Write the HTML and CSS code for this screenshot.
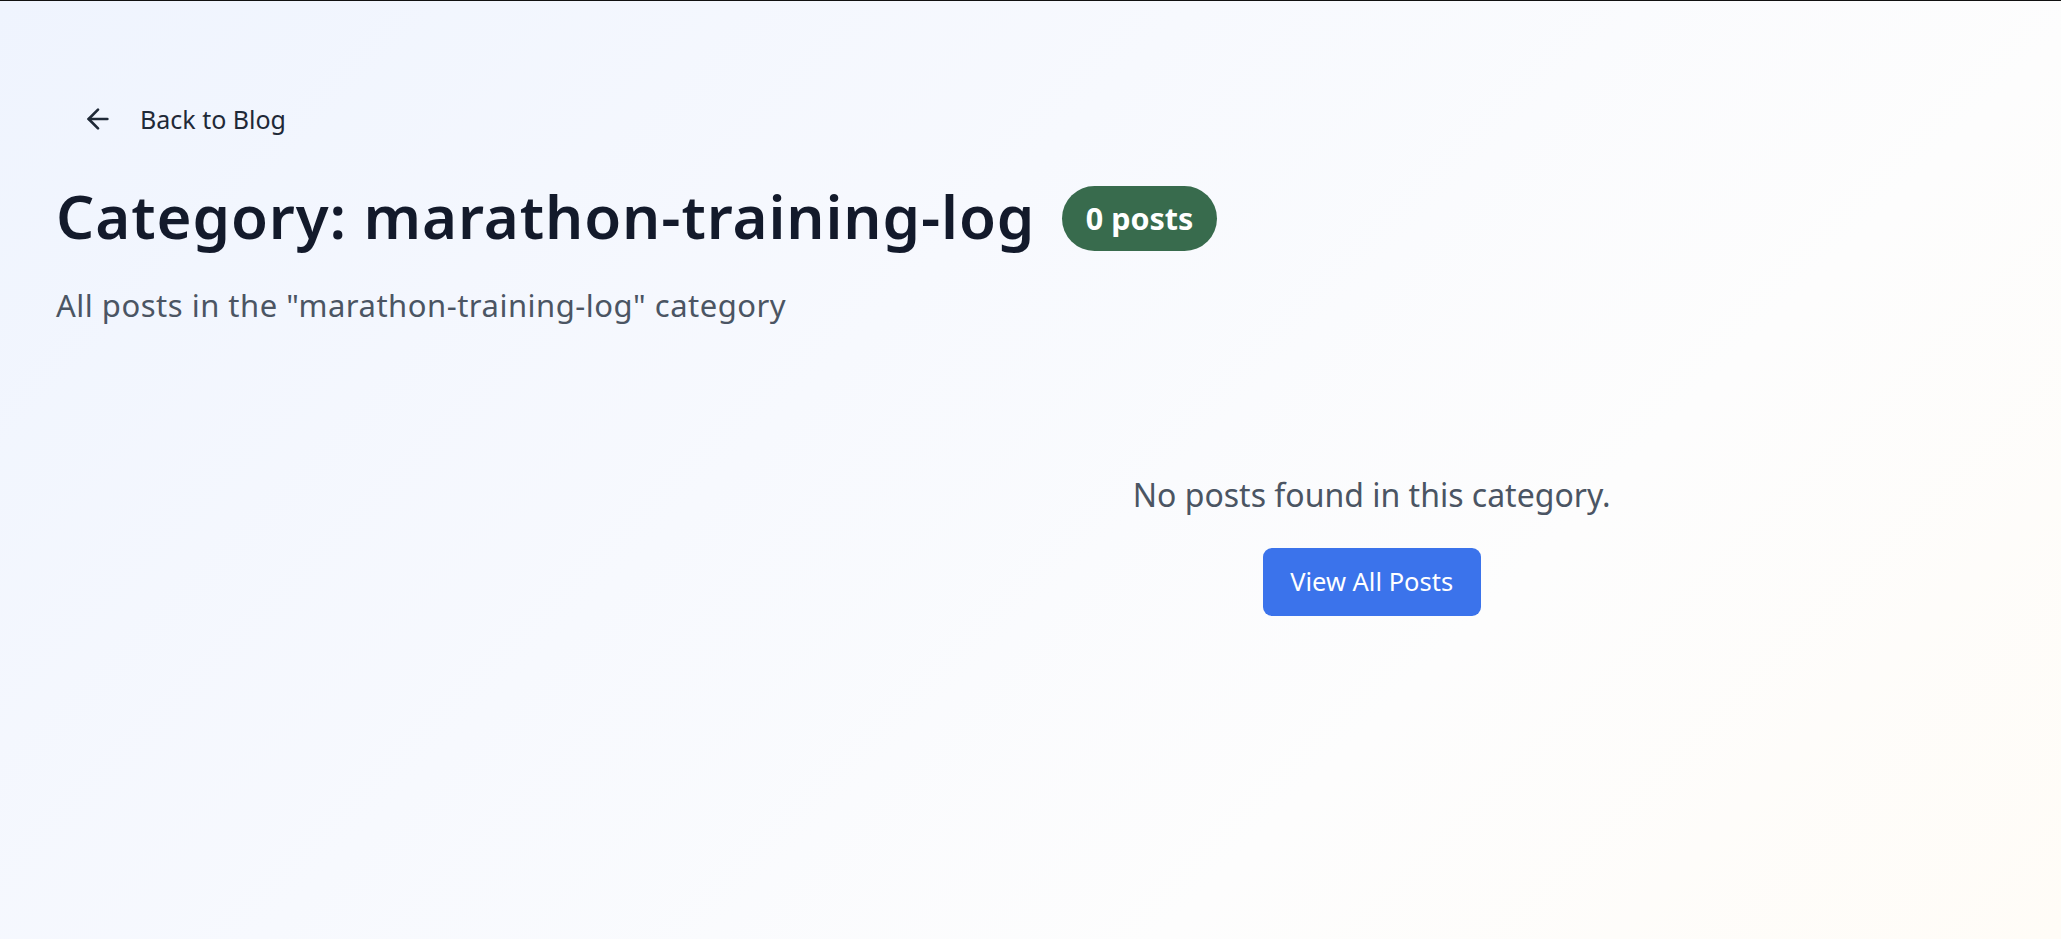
FILE: index.html
```html
<!DOCTYPE html>
<html lang="en">
<head>
<meta charset="utf-8">
<title>Category: marathon-training-log</title>
<link rel="stylesheet" href="styles.css">
</head>
<body>
<main class="page">
  <a class="back-link" href="#">
    <svg class="back-icon" viewBox="0 0 24 24" width="32" height="32" fill="none" stroke="currentColor" stroke-width="2" stroke-linecap="round" stroke-linejoin="round"><path d="m12 19-7-7 7-7"/><path d="M19 12H5"/></svg>
    <span>Back to Blog</span>
  </a>
  <header class="header">
    <div class="title-row">
      <h1 class="title">Category: marathon-training-log</h1>
      <span class="badge">0 posts</span>
    </div>
    <p class="subtitle">All posts in the "marathon-training-log" category</p>
  </header>
  <section class="grid">
    <div class="empty">
      <p class="empty-text">No posts found in this category.</p>
      <a class="btn" href="#">View All Posts</a>
    </div>
  </section>
</main>
</body>
</html>
```
FILE: styles.css
```css
html, body {
  margin: 0;
  padding: 0;
  min-height: 100%;
}
body {
  border-top: 1px solid #111;
  min-height: 938px;
  background: linear-gradient(135deg, #eff4fe 0%, #f7f9fe 40%, #fdfdfd 70%, #fffcf7 100%);
  font-family: "Noto Sans", "Open Sans", sans-serif;
  color: #111827;
}
.page {
  padding: 99.5px 57px 0 56px;
}
.back-link {
  display: inline-flex;
  align-items: center;
  gap: 26px;
  padding-left: 26px;
  font-size: 25px;
  line-height: 37.5px;
  color: #1f2937;
  text-decoration: none;
}
.back-icon {
  display: block;
  color: #1f2937;
}
.header {
  margin-top: 38px;
}
.title-row {
  display: flex;
  align-items: center;
  gap: 27px;
}
.title {
  margin: 0;
  font-size: 60px;
  line-height: 76.7px;
  font-weight: 600;
  letter-spacing: 0.9px;
  color: #131a2b;
}
.badge {
  margin-top: 3px;
  display: inline-block;
  padding: 12px 23.5px;
  border-radius: 999px;
  background: #386b4d;
  color: #fff;
  font-size: 30.5px;
  line-height: 41px;
  font-weight: 700;
}
.subtitle {
  margin: 29px 0 0;
  font-size: 31px;
  line-height: 43.4px;
  letter-spacing: 0.5px;
  color: #4b5563;
}
.grid {
  display: grid;
  grid-template-columns: repeat(3, 1fr);
  gap: 102px;
  margin-top: 146px;
}
.empty {
  grid-column: 2 / 4;
  display: flex;
  flex-direction: column;
  align-items: center;
  text-align: center;
}
.empty-text {
  margin: 0;
  font-size: 32px;
  line-height: 44.8px;
  color: #4b5563;
}
.btn {
  margin-top: 29.5px;
  display: inline-block;
  padding: 16.6px 27.5px;
  border-radius: 9px;
  background: #3b73eb;
  color: #fff;
  font-size: 25.5px;
  line-height: 34.7px;
  text-decoration: none;
}
```
